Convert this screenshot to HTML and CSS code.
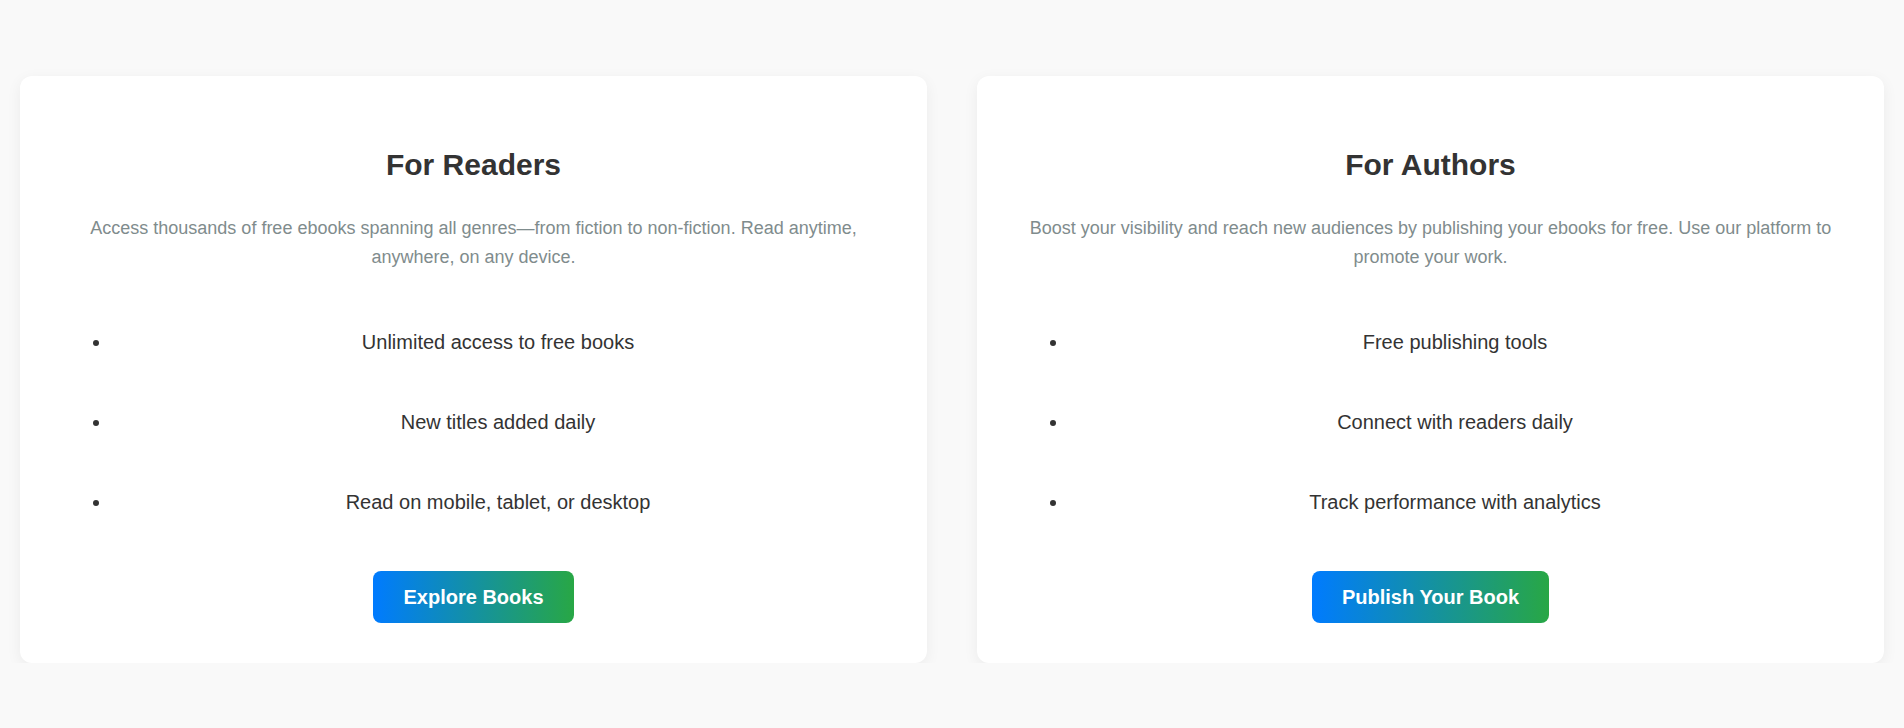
FILE: index.html
```html
<!DOCTYPE html>
<html lang="en">
<head>
<meta charset="utf-8">
<title>Readers and Authors</title>
<link rel="stylesheet" href="styles.css">
</head>
<body>
<main class="features">
  <section class="card">
    <h2 class="card-title">For Readers</h2>
    <p class="card-text">Access thousands of free ebooks spanning all genres—from fiction to non-fiction. Read anytime, anywhere, on any device.</p>
    <ul class="card-list">
      <li>Unlimited access to free books</li>
      <li>New titles added daily</li>
      <li>Read on mobile, tablet, or desktop</li>
    </ul>
    <div class="card-action"><a class="btn" href="#">Explore Books</a></div>
  </section>
  <section class="card">
    <h2 class="card-title">For Authors</h2>
    <p class="card-text">Boost your visibility and reach new audiences by publishing your ebooks for free. Use our platform to promote your work.</p>
    <ul class="card-list">
      <li>Free publishing tools</li>
      <li>Connect with readers daily</li>
      <li>Track performance with analytics</li>
    </ul>
    <div class="card-action"><a class="btn" href="#">Publish Your Book</a></div>
  </section>
</main>
</body>
</html>
```
FILE: styles.css
```css
* { box-sizing: border-box; }
html, body { margin: 0; padding: 0; }
body {
  background: #f9f9f9;
  font-family: "Liberation Sans", Arial, sans-serif;
  color: #333;
  line-height: 1.6;
}
.features {
  display: grid;
  grid-template-columns: 1fr 1fr;
  gap: 50px;
  padding: 76px 20px 0 20px;
}
.card {
  background: #fff;
  border-radius: 12px;
  box-shadow: 0 4px 15px rgba(0, 0, 0, 0.06);
  padding: 40px;
  text-align: center;
}
.card-title {
  font-size: 30px;
  font-weight: bold;
  color: #333;
  margin: 25px 0 25px;
}
.card-text {
  font-size: 18px;
  color: #7f8c8d;
  margin: 0;
}
.card-list {
  margin: 30px 0 29px;
  padding-left: 52px;
  font-size: 20px;
  line-height: 32px;
  color: #333;
}
.card-list li {
  padding: 24px 3px 24px 0;
}
.card-action {
  line-height: 0;
}
.btn {
  display: inline-block;
  padding: 15px 30px 14px;
  font-size: 20px;
  line-height: 23px;
  font-weight: bold;
  color: #fff;
  text-decoration: none;
  border-radius: 8px;
  background: linear-gradient(90deg, #007bff, #28a745);
}
```
